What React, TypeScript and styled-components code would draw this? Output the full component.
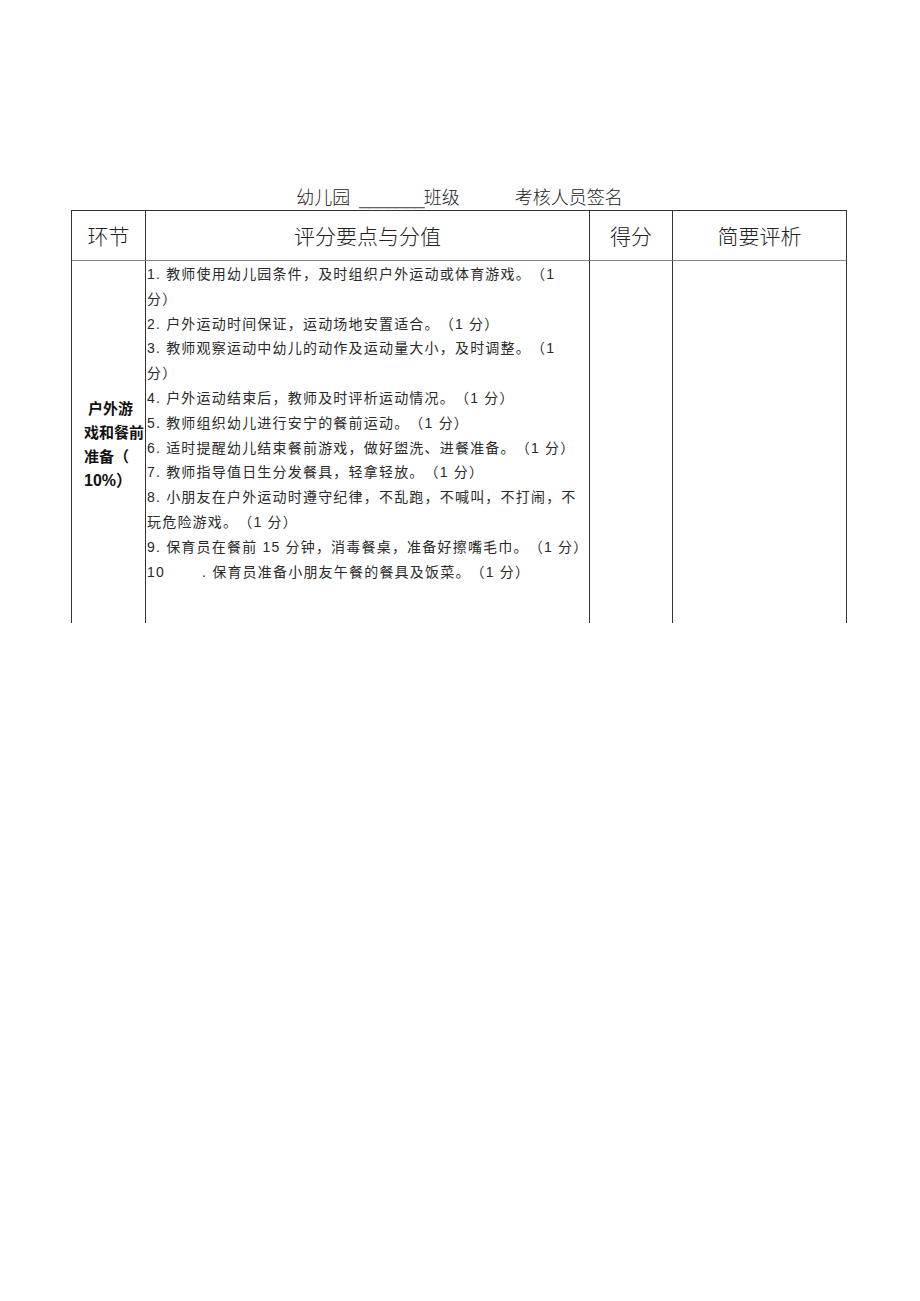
import * as React from 'react';
import styled, { createGlobalStyle } from 'styled-components';

const GlobalStyle = createGlobalStyle`
  html, body {
    margin: 0;
    padding: 0;
    background: #ffffff;
  }
  body {
    font-family: 'Liberation Sans', 'Noto Sans CJK SC', sans-serif;
    color: #222;
    text-spacing-trim: space-all;
  }
`;

const StyledPage = styled.div`
  width: 920px;
  min-height: 1301px;
  padding-top: 183px;
  box-sizing: border-box;
  display: flex;
  flex-direction: column;
  align-items: center;
`;

const StyledTitle = styled.div`
  display: flex;
  align-items: baseline;
  height: 27px;
  font-size: 18px;
  font-weight: 300;
  color: #222;
  white-space: pre;
  margin-right: 1px;
`;

const StyledBlank = styled.span`
  letter-spacing: -0.8px;
  color: #666;
  margin: 0 0 0 9px;
`;

const StyledGap = styled.span`
  display: inline-block;
  width: 55px;
`;

const StyledTable = styled.div`
  width: 776px;
  display: grid;
  grid-template-columns: 74px 444px 83px 174px;
  border-top: 1px solid #333;
  border-left: 1px solid #333;
  box-sizing: border-box;
  margin-right: 2px;
`;

const StyledHeadCell = styled.div`
  height: 50px;
  box-sizing: border-box;
  border-right: 1px solid #333;
  border-bottom: 1px solid #888;
  display: flex;
  align-items: center;
  justify-content: center;
  font-family: 'Noto Sans CJK SC', sans-serif;
  font-size: 21px;
  font-weight: 300;
  color: #222;
  padding-bottom: 2px;
`;

const StyledBodyCell = styled.div<{ $align?: 'center' | 'start' }>`
  height: 362px;
  box-sizing: border-box;
  border-right: 1px solid #333;
  display: flex;
  flex-direction: column;
  justify-content: ${(p) => (p.$align === 'center' ? 'center' : 'flex-start')};
`;

const StyledLabel = styled.div`
  padding: 6px 0 0 12px;
  font-size: 15px;
  font-weight: 700;
  line-height: 24px;
  color: #111;
`;

const StyledLabelLine = styled.div<{ $indent?: number; $big?: boolean }>`
  padding-left: ${(p) => p.$indent || 0}px;
  font-size: ${(p) => (p.$big ? 16 : 15)}px;
  white-space: nowrap;
`;

const StyledPoints = styled.div`
  padding: 1px 0 0 1px;
  font-size: 14px;
  line-height: 24.8px;
  letter-spacing: 1.2px;
  color: #2a2a2a;
`;

const StyledLine = styled.div`
  white-space: pre;
`;

const StyledTen = styled.span`
  display: inline-block;
  width: 55px;
`;

const POINTS: React.ReactNode[] = [
  '1. 教师使用幼儿园条件，及时组织户外运动或体育游戏。（1',
  '分）',
  '2. 户外运动时间保证，运动场地安置适合。（1 分）',
  '3. 教师观察运动中幼儿的动作及运动量大小，及时调整。（1',
  '分）',
  '4. 户外运动结束后，教师及时评析运动情况。（1 分）',
  '5. 教师组织幼儿进行安宁的餐前运动。（1 分）',
  '6. 适时提醒幼儿结束餐前游戏，做好盥洗、进餐准备。（1 分）',
  '7. 教师指导值日生分发餐具，轻拿轻放。（1 分）',
  '8. 小朋友在户外运动时遵守纪律，不乱跑，不喊叫，不打闹，不',
  '玩危险游戏。（1 分）',
  '9. 保育员在餐前 15 分钟，消毒餐桌，准备好擦嘴毛巾。（1 分）',
  <>
    <StyledTen>10</StyledTen>. 保育员准备小朋友午餐的餐具及饭菜。（1 分）
  </>,
];

const App = () => {
  return (
    <>
      <GlobalStyle />
      <StyledPage>
        <StyledTitle>
          <span>幼儿园</span>
          <StyledBlank>_______</StyledBlank>
          <span>班级</span>
          <StyledGap />
          <span>考核人员签名</span>
        </StyledTitle>
        <StyledTable>
          <StyledHeadCell>环节</StyledHeadCell>
          <StyledHeadCell>评分要点与分值</StyledHeadCell>
          <StyledHeadCell>得分</StyledHeadCell>
          <StyledHeadCell>简要评析</StyledHeadCell>

          <StyledBodyCell $align="center">
            <StyledLabel>
              <StyledLabelLine $indent={4}>户外游</StyledLabelLine>
              <StyledLabelLine>戏和餐前</StyledLabelLine>
              <StyledLabelLine>准备（</StyledLabelLine>
              <StyledLabelLine $big>10%）</StyledLabelLine>
            </StyledLabel>
          </StyledBodyCell>
          <StyledBodyCell>
            <StyledPoints>
              {POINTS.map((line, i) => (
                <StyledLine key={i}>{line}</StyledLine>
              ))}
            </StyledPoints>
          </StyledBodyCell>
          <StyledBodyCell />
          <StyledBodyCell />
        </StyledTable>
      </StyledPage>
    </>
  );
};

export default App;
